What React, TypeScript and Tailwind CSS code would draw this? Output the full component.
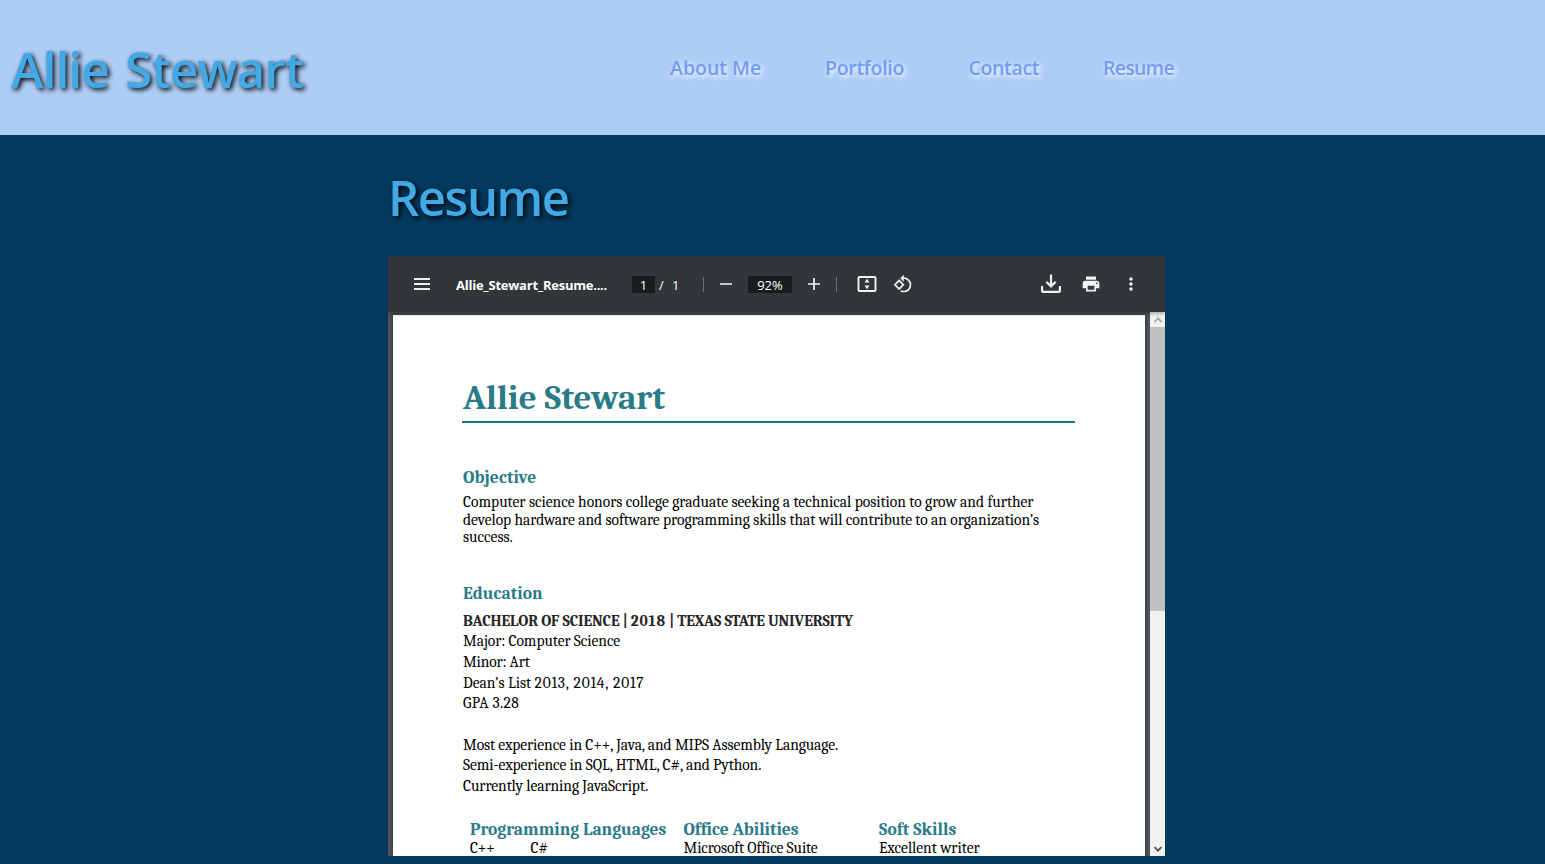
import { MdMoreVert, MdPrint, MdRotate90DegreesCcw } from "react-icons/md";

const navItems = [
  { label: "About Me", width: "w-[155px]", tracking: "tracking-[0px]" },
  { label: "Portfolio", width: "w-[143.5px]", tracking: "tracking-[-0.3px]" },
  { label: "Contact", width: "w-[134.5px]", tracking: "tracking-[-0.35px]" },
  { label: "Resume", width: "w-[80px]", tracking: "tracking-[-0.75px]" },
];

const experienceLines = [
  { text: "Most experience in C++, Java, and MIPS Assembly Language.", tracking: "tracking-[-0.08px]" },
  { text: "Semi-experience in SQL, HTML, C#, and Python.", tracking: "tracking-[-0.06px]" },
  { text: "Currently learning JavaScript.", tracking: "tracking-[-0.05px]" },
];

function Header() {
  return (
    <header className="flex h-[135px] shrink-0 bg-[#adcdf7]">
      <h1 className="w-[659px] pt-[35px] pl-[11px] text-[49px] leading-[68px] font-semibold tracking-[-0.7px] text-[#43a9e6] [text-shadow:2px_2px_5px_black] [word-spacing:4px]">
        Allie Stewart
      </h1>
      <nav className="flex pt-[55px] pl-[11px] text-[19.5px] leading-[26px] font-semibold text-[#759cf3] [text-shadow:2px_2px_5px_white]">
        {navItems.map((item) => (
          <a key={item.label} className={`${item.width} ${item.tracking}`}>
            {item.label}
          </a>
        ))}
      </nav>
    </header>
  );
}

function FitPageIcon() {
  return (
    <svg width="20" height="18" viewBox="0 0 20 18" fill="none">
      <rect x="1.5" y="2" width="17" height="14" rx="1" stroke="#f1f1f1" strokeWidth="1.9" />
      <path d="M10 3.8 12.5 7.6h-5zM10 14.2 7.5 10.4h5z" fill="#f1f1f1" />
    </svg>
  );
}

function DownloadIcon() {
  return (
    <svg width="20" height="20" viewBox="0 0 20 20" fill="none" stroke="#f1f1f1" strokeWidth="2.2">
      <path d="M10 .5v11.5M5.3 7.8 10 12.4l4.7-4.6" />
      <path d="M1.1 12v4.7q0 1.2 1.2 1.2h15.4q1.2 0 1.2-1.2V12" />
    </svg>
  );
}

function Toolbar() {
  return (
    <div className="relative z-10 flex h-14 shrink-0 items-center bg-[#323639] text-[13px] text-white shadow-[0_1px_5px_rgba(0,0,0,0.4)]">
      <div className="ml-[26px] flex w-4 flex-col gap-[3px]">
        <div className="h-[2px] bg-[#f1f1f1]" />
        <div className="h-[2px] bg-[#f1f1f1]" />
        <div className="h-[2px] bg-[#f1f1f1]" />
      </div>
      <span className="ml-[26px] w-[176px] pt-[3px] text-[13px] font-bold tracking-[-0.24px]">Allie_Stewart_Resume....</span>
      <span className="flex h-[17px] w-[23px] items-center justify-center bg-[#191b1c] pt-[3px]">1</span>
      <span className="ml-[4px] w-[13px] pt-[3px]">/</span>
      <span className="w-[31px] pt-[3px]">1</span>
      <span className="h-[15px] w-px bg-[#6d7073]" />
      <span className="ml-[16px] h-[2px] w-3 bg-[#c4c5c6]" />
      <span className="ml-[16px] flex h-[17px] w-11 items-center justify-center bg-[#191b1c] pt-[3px]">92%</span>
      <svg className="ml-4" width="12" height="12" viewBox="0 0 12 12" stroke="#f1f1f1" strokeWidth="1.7">
        <path d="M0 6h12M6 0v12" />
      </svg>
      <span className="ml-[16px] h-[15px] w-px bg-[#6d7073]" />
      <span className="ml-5">
        <FitPageIcon />
      </span>
      <MdRotate90DegreesCcw className="ml-4 text-[#f1f1f1]" size={20} />
      <span className="ml-auto">
        <DownloadIcon />
      </span>
      <MdPrint className="ml-5 text-[#f1f1f1]" size={20} />
      <MdMoreVert className="mr-6 ml-5 text-[#f1f1f1]" size={20} />
    </div>
  );
}

function ResumePage() {
  return (
    <article className="mt-[3px] ml-[5px] h-[541px] w-[752px] overflow-hidden bg-white pt-[62px] pl-[70px] font-[Cambria,Caladea,serif] text-[15.5px] whitespace-nowrap text-black shadow-[0_0_5px_rgba(0,0,0,0.5)]">
      <h2 className="text-[35px] leading-[42px] font-bold tracking-[0.08px] text-[#2a7b88]">Allie Stewart</h2>
      <hr className="mt-[2px] -ml-px h-[2px] w-[613px] border-0 bg-[#0b7f80]" />

      <h3 className="mt-[44px] text-[17.5px] leading-[20px] font-bold tracking-[0.12px] text-[#2a7b88]">Objective</h3>
      <div className="mt-[7px] leading-[17.7px]">
        <p>Computer science honors college graduate seeking a technical position to grow and further</p>
        <p className="tracking-[-0.02px]">
          develop hardware and software programming skills that will contribute to an organization’s
        </p>
        <p>success.</p>
      </div>

      <h3 className="mt-[36px] text-[17.5px] leading-[20px] font-bold tracking-[0.08px] text-[#2a7b88]">Education</h3>
      <div className="mt-[7.4px] leading-[20.7px]">
        <h4 className="font-bold tracking-[-0.14px] text-[#262626]">
          BACHELOR OF SCIENCE | <span className="tracking-[0.8px]">2018</span> | TEXAS STATE UNIVERSITY
        </h4>
        <p className="tracking-[-0.06px]">Major: Computer Science</p>
        <p className="tracking-[-0.15px]">Minor: Art</p>
        <p>
          Dean’s List <span className="tracking-[0.8px]">2013, 2014, 2017</span>
        </p>
        <p className="tracking-[0.33px]">GPA 3.28</p>
        <div className="mt-[20.7px]">
          {experienceLines.map((line) => (
            <p key={line.text} className={line.tracking}>
              {line.text}
            </p>
          ))}
        </div>
      </div>

      <div className="mt-[22.4px] ml-[7px] grid grid-cols-[213.5px_195.5px_180px] leading-[18px]">
        <section>
          <h3 className="text-[17.5px] leading-[20px] font-bold text-[#2a7b88]">Programming Languages</h3>
          <div className="flex">
            <span className="w-[60.5px] tracking-[-0.2px]">C++</span>
            <span>C#</span>
          </div>
        </section>
        <section>
          <h3 className="text-[17.5px] leading-[20px] font-bold text-[#2a7b88]">Office Abilities</h3>
          <p className="tracking-[-0.1px]">Microsoft Office Suite</p>
        </section>
        <section>
          <h3 className="text-[17.5px] leading-[20px] font-bold tracking-[0.08px] text-[#2a7b88]">Soft Skills</h3>
          <p>Excellent writer</p>
        </section>
      </div>
    </article>
  );
}

function Scrollbar() {
  return (
    <div className="ml-auto flex w-[15px] flex-col bg-[#f1f1f1]">
      <div className="flex h-[15px] items-center justify-center">
        <svg width="8" height="6" viewBox="0 0 8 6" fill="none" stroke="#a8a8a8" strokeWidth="1.8">
          <path d="M.6 5 4 1.4 7.4 5" />
        </svg>
      </div>
      <div className="h-[284px] bg-[#c1c1c1]" />
      <div className="mt-auto flex h-[15px] items-center justify-center">
        <svg width="8" height="6" viewBox="0 0 8 6" fill="none" stroke="#505050" strokeWidth="1.8">
          <path d="M.6 1 4 4.6 7.4 1" />
        </svg>
      </div>
    </div>
  );
}

export default function App() {
  return (
    <div className="flex h-[864px] w-[1545px] flex-col overflow-hidden bg-[#03395d] font-['Open_Sans',sans-serif]">
      <Header />
      <main className="ml-[388px] w-[777px]">
        <h2 className="mt-[28px] mb-[25px] text-[49px] leading-[68px] font-semibold tracking-[-1.5px] text-[#43a9e6] [text-shadow:2px_2px_5px_black]">
          Resume
        </h2>
        <div className="flex h-[600px] flex-col overflow-hidden bg-[#525659]">
          <Toolbar />
          <div className="flex h-[544px] overflow-hidden">
            <ResumePage />
            <Scrollbar />
          </div>
        </div>
      </main>
    </div>
  );
}
